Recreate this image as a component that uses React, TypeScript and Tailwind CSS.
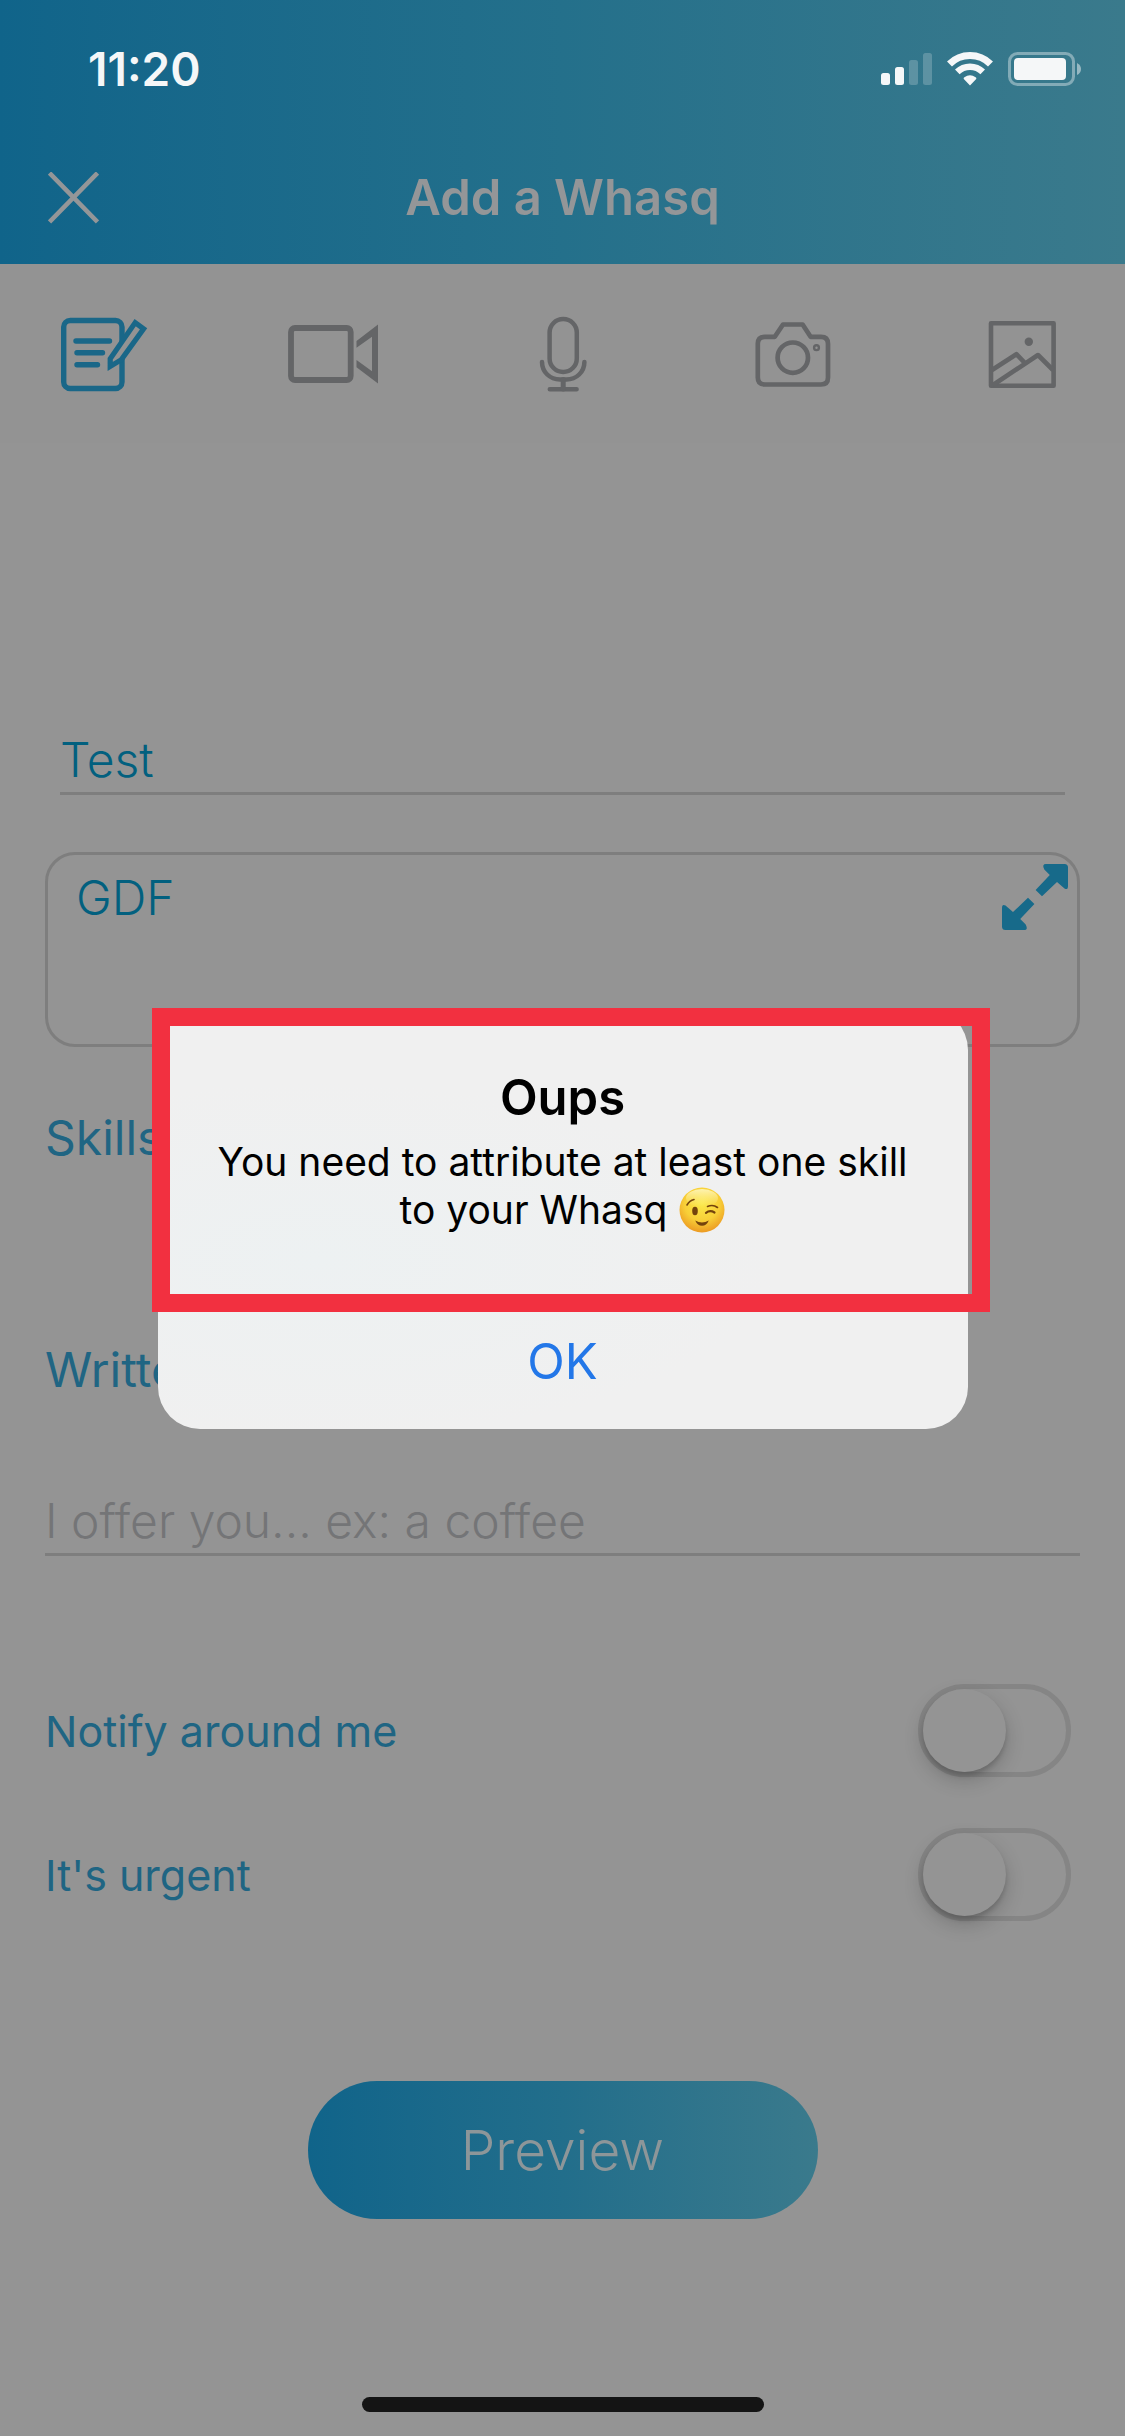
import type { ReactNode } from "react";

function StatusIcons() {
  return (
    <svg width="202" height="36" viewBox="0 0 202 36" fill="#f5f7f8" aria-hidden="true">
      <rect x="1" y="22" width="9" height="12" rx="2.5" />
      <rect x="15" y="16" width="9" height="18" rx="2.5" />
      <rect x="29" y="9" width="9" height="25" rx="2.5" opacity="0.22" />
      <rect x="43" y="2" width="9" height="32" rx="2.5" opacity="0.22" />
      <g fill="none" stroke="#f5f7f8">
        <path d="M69.5 13.1A29 29 0 0 1 110.5 13.1" strokeWidth="7" />
        <path d="M77.3 20.9A18 18 0 0 1 102.7 20.9" strokeWidth="6.5" />
      </g>
      <path d="M90 34.5L83.8 28Q83.2 27 84.4 26.2Q90 22.4 95.6 26.2Q96.8 27 96.2 28Z" />
      <rect x="129.5" y="2.5" width="64" height="31" rx="8" fill="none" stroke="#f5f7f8" strokeWidth="3" opacity="0.4" />
      <rect x="134" y="7" width="52" height="22" rx="4" />
      <path d="M197 12Q201 14 201 18T197 24Z" opacity="0.5" />
    </svg>
  );
}

function Icon({ children }: { children: ReactNode }) {
  return (
    <svg width="90" height="80" viewBox="0 0 90 80" fill="none" stroke="currentColor" aria-hidden="true">
      {children}
    </svg>
  );
}

const tools: { label: string; color: string; drawing: ReactNode }[] = [
  {
    label: "Text",
    color: "text-[#1a6788]",
    drawing: (
      <>
        <rect x="4.7" y="4.5" width="58.3" height="68" rx="6.5" strokeWidth="5.4" />
        <path d="M17 25H50.5M18 36.7H43.5M18 48.7H38.5" strokeWidth="5.4" strokeLinecap="round" />
        <path d="M51.2 50.4V42.8L76.2 6.6L84.6 12.8L62.4 43.6Z" fill="#939393" strokeWidth="5.2" />
      </>
    ),
  },
  {
    label: "Video",
    color: "text-[#646567]",
    drawing: (
      <>
        <rect x="3" y="12" width="59.7" height="52" rx="4" strokeWidth="5.8" />
        <path d="M68.5 25L90 8.5V67.5L68.5 51.3V44L84 55.3V20.7L68.5 31.7Z" fill="currentColor" stroke="none" />
      </>
    ),
  },
  {
    label: "Audio",
    color: "text-[#646567]",
    drawing: (
      <g strokeWidth="4.5" strokeLinecap="round">
        <rect x="31.6" y="3" width="27.2" height="53" rx="13.6" />
        <path d="M24 46C24 56 32 63.5 42 63.5H48.4C58.4 63.5 66.4 56 66.4 46M31.8 73.3H58.6" />
        <path d="M45.2 63.5V73" strokeWidth="5" />
      </g>
    ),
  },
  {
    label: "Photo",
    color: "text-[#646567]",
    drawing: (
      <g strokeWidth="4.7" strokeLinejoin="round">
        <path d="M27.8 20.8L36 8.5H55.6L63.6 20.8H74Q81 20.8 81 27.8V61.5Q81 68.5 74 68.5H17.8Q10.8 68.5 10.8 61.5V27.8Q10.8 20.8 17.8 20.8Z" />
        <circle cx="45.8" cy="41.7" r="15.2" />
        <circle cx="69.5" cy="31.7" r="2.4" strokeWidth="2.4" />
      </g>
    ),
  },
  {
    label: "Gallery",
    color: "text-[#646567]",
    drawing: (
      <g strokeWidth="4.6" strokeLinejoin="round">
        <rect x="15" y="7.3" width="62.6" height="62.4" />
        <path d="M16 54L40.4 38.2L48.8 46.8M17 69L62 39L77 54" />
        <circle cx="52.8" cy="25.7" r="4.2" fill="currentColor" stroke="none" />
      </g>
    ),
  },
];

function ExpandIcon() {
  const arrow =
    "M44 0H62.5Q66 0 66 3.5V22Q66 26.5 62.5 24.5L55 18L40 32.3L33.6 26L47.8 11L42.3 5.5Q39.5 0 44 0Z";
  return (
    <svg width="66" height="66" viewBox="0 0 66 66" fill="currentColor" aria-hidden="true">
      <path d={arrow} />
      <path d={arrow} transform="rotate(180 33 33)" />
    </svg>
  );
}

function WinkIcon() {
  return (
    <svg width="46" height="46" viewBox="0 0 46 46" role="img" aria-label="winking face">
      <defs>
        <radialGradient id="face" cx="0.5" cy="0.35" r="0.65">
          <stop offset="0" stopColor="#fbe94a" />
          <stop offset="0.6" stopColor="#f8cf38" />
          <stop offset="1" stopColor="#ec9a22" />
        </radialGradient>
        <linearGradient id="shine" x1="0" y1="0" x2="0" y2="1">
          <stop offset="0" stopColor="#fffbd0" stopOpacity="0.8" />
          <stop offset="1" stopColor="#fff3a0" stopOpacity="0" />
        </linearGradient>
      </defs>
      <circle cx="23" cy="23" r="22.5" fill="url(#face)" />
      <ellipse cx="23" cy="11" rx="16" ry="9" fill="url(#shine)" />
      <ellipse cx="16" cy="24" rx="2.8" ry="4.2" fill="#74430c" />
      <g fill="none" stroke="#74430c" strokeLinecap="round">
        <path d="M8 18Q10.5 13.5 15 12.5" strokeWidth="1.6" />
        <path d="M28.5 19.5Q34 17 38.5 20.5" strokeWidth="1.6" />
        <path d="M27 25.8Q31 22.8 35.5 25.5" strokeWidth="2.2" />
      </g>
      <path d="M16.2 33.5Q23 37.5 29.8 33.5Q27.5 38.8 23 38.8T16.2 33.5Z" fill="#74430c" />
    </svg>
  );
}

function Toggle({ id, label }: { id: string; label: string }) {
  return (
    <div className="flex items-center justify-between pr-[9px]">
      <label htmlFor={id} className="text-[43px] leading-[60px] text-[#1f6583]">
        {label}
      </label>
      <input
        id={id}
        type="checkbox"
        role="switch"
        className="h-[93px] w-[153px] appearance-none rounded-full border-[5px] border-[#858585] before:block before:size-[83px] before:rounded-full before:bg-[#949494] before:shadow-[0_8px_20px_rgba(0,0,0,0.2),0_4px_4px_rgba(0,0,0,0.14)] before:content-[''] checked:before:ml-[60px]"
      />
    </div>
  );
}

export default function App() {
  return (
    <div className="relative flex min-h-screen flex-col bg-[#949494] font-['Inter','Liberation_Sans',sans-serif]">
      <header className="bg-linear-to-r from-[#10648a] via-[#24708b] to-[#3a7a8c]">
        <div className="flex h-[132px] items-center justify-between pt-[6px] pr-[43px] pl-[88px]">
          <time className="text-[46px] leading-[60px] font-semibold text-[#f5f7f8]">11:20</time>
          <StatusIcons />
        </div>
        <div className="grid h-[132px] grid-cols-[1fr_auto_1fr] items-center px-[48px]">
          <button type="button" aria-label="Close" className="justify-self-start text-[#949698]">
            <svg width="51" height="52" viewBox="0 0 51 52" stroke="currentColor" strokeWidth="4.6" aria-hidden="true">
              <path d="M1.5 1L49.5 50M49.5 1L1.5 50" />
            </svg>
          </button>
          <h1 className="text-[49px] leading-[60px] font-semibold text-[#949698]">Add a Whasq</h1>
        </div>
      </header>

      <nav aria-label="Content type" className="flex justify-between bg-[#939393] px-[59px] pt-[52px] pb-[47px]">
        {tools.map((tool) => (
          <button key={tool.label} type="button" aria-label={tool.label} className={tool.color}>
            <Icon>{tool.drawing}</Icon>
          </button>
        ))}
      </nav>

      <main className="flex flex-1 flex-col px-[45px] pt-[285px]">
        <input
          aria-label="Title"
          defaultValue="Test"
          className="mx-[15px] h-[67px] border-b-[3px] border-[#7e7e7e] bg-transparent text-[48px] font-light text-[#02607f] outline-none"
        />
        <div className="relative mt-[57px] flex">
          <textarea
            aria-label="Description"
            defaultValue="GDF"
            className="h-[195px] w-full resize-none rounded-[30px] border-[3px] border-[#7e7e7e] bg-transparent py-[13px] pr-[90px] pl-[28px] text-[48px] leading-[60px] font-light text-[#02607f] outline-none"
          />
          <button type="button" aria-label="Expand" className="absolute top-3 right-3 text-[#176a8a]">
            <ExpandIcon />
          </button>
        </div>
        <h2 className="mt-[61px] text-[48px] leading-[60px] text-[#206583]">Skills</h2>
        <label htmlFor="offer" className="mt-[172px] text-[48px] leading-[60px] text-[#206583]">
          Written
        </label>
        <input
          id="offer"
          placeholder="I offer you... ex: a coffee"
          className="mt-[89px] h-[67px] border-b-[3px] border-[#7e7e7e] bg-transparent text-[48px] font-light outline-none placeholder:text-[#747577]"
        />
        <div className="mt-[128px] flex flex-col gap-[51px]">
          <Toggle id="notify" label="Notify around me" />
          <Toggle id="urgent" label="It's urgent" />
        </div>
        <button
          type="button"
          className="mt-[160px] h-[138px] w-[510px] self-center rounded-full bg-linear-to-r from-[#10648a] via-[#226e8b] to-[#3a7a8c] text-[55px] font-light text-[#8d9699]"
        >
          Preview
        </button>
        <div className="mt-auto mb-6 h-[15px] w-[402px] self-center rounded-full bg-[#141414]" />
      </main>

      <div className="absolute inset-0 flex items-center justify-center">
        <div
          role="alertdialog"
          aria-labelledby="alert-title"
          aria-describedby="alert-text"
          className="relative w-[810px] rounded-[42px] bg-[#f0f0f0] bg-radial-[at_20%_60%] from-[#edf1f2] to-[#f0f0f0] to-50% text-center"
        >
          <div className="px-[48px] pt-[60px] pb-[62px] text-black">
            <h2 id="alert-title" className="text-[49px] leading-[60px] font-semibold">
              Oups
            </h2>
            <p id="alert-text" className="mt-[10px] text-[39px] leading-[48px]">
              You need to attribute at least one skill
              <span className="flex items-center justify-center gap-3">
                to your Whasq <WinkIcon />
              </span>
            </p>
          </div>
          <button type="button" className="h-[133px] w-full text-[49px] leading-[60px] text-[#2377e8]">
            OK
          </button>
          <div className="pointer-events-none absolute top-0 -right-[22px] -left-[6px] h-[304px] border-[18px] border-[#f23040]" />
        </div>
      </div>
    </div>
  );
}
